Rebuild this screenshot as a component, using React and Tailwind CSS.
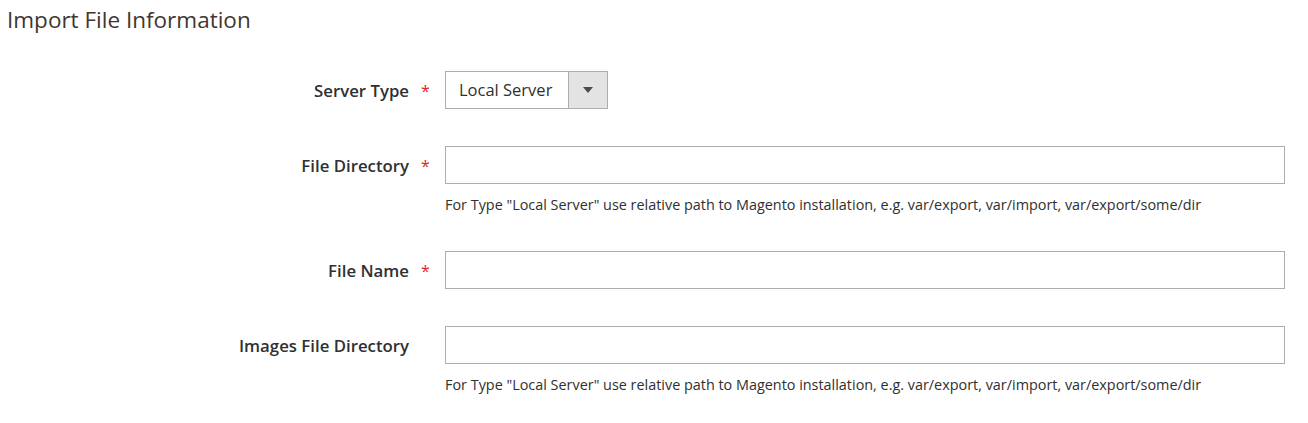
import React from "react";

const note =
  'For Type "Local Server" use relative path to Magento installation, e.g. var/export, var/import, var/export/some/dir';

function Label({ text, required }) {
  return (
    <div className="w-[445px] shrink-0 flex items-center justify-end pr-[16px] pt-[2px]">
      <span className="text-[16.8px] font-semibold text-[#303030]">{text}</span>
      <span className="ml-[12px] w-[8px] text-[#e22626] text-[16px] leading-none">
        {required ? "*" : ""}
      </span>
    </div>
  );
}

function TextRow({ label, required, hint }) {
  return (
    <div className="flex flex-col">
      <div className="flex items-center">
        <Label text={label} required={required} />
        <input
          type="text"
          className="flex-1 h-[38px] border border-[#adadad] bg-white outline-none px-3"
        />
      </div>
      {hint && (
        <div className="pl-[445px] mt-[12px] text-[14.4px] leading-[18px] text-[#303030]">
          {hint}
        </div>
      )}
    </div>
  );
}

export default function App() {
  return (
    <div
      className="w-[1308px] h-[423px] bg-white overflow-hidden pr-[23px]"
      style={{ fontFamily: '"Open Sans", sans-serif' }}
    >
      <h2 className="pl-[7px] pt-[5px] text-[22.5px] leading-[30px] text-[#41362f] font-normal">
        Import File Information
      </h2>

      <div className="mt-[36px] flex flex-col gap-[37px]">
        <div className="flex items-center">
          <Label text="Server Type" required />
          <div className="w-[163px] h-[38px] border border-[#adadad] flex items-stretch bg-white">
            <span className="flex-1 flex items-center pl-[13px] text-[16.5px] text-[#303030]">
              Local Server
            </span>
            <span className="w-[39px] bg-[#e3e3e3] border-l border-[#adadad] flex items-center justify-center">
              <svg width="10" height="6" viewBox="0 0 10 6">
                <path d="M0 0h10L5 6z" fill="#514943" />
              </svg>
            </span>
          </div>
        </div>

        <TextRow label="File Directory" required hint={note} />
        <TextRow label="File Name" required />
        <TextRow label="Images File Directory" hint={note} />
      </div>
    </div>
  );
}
